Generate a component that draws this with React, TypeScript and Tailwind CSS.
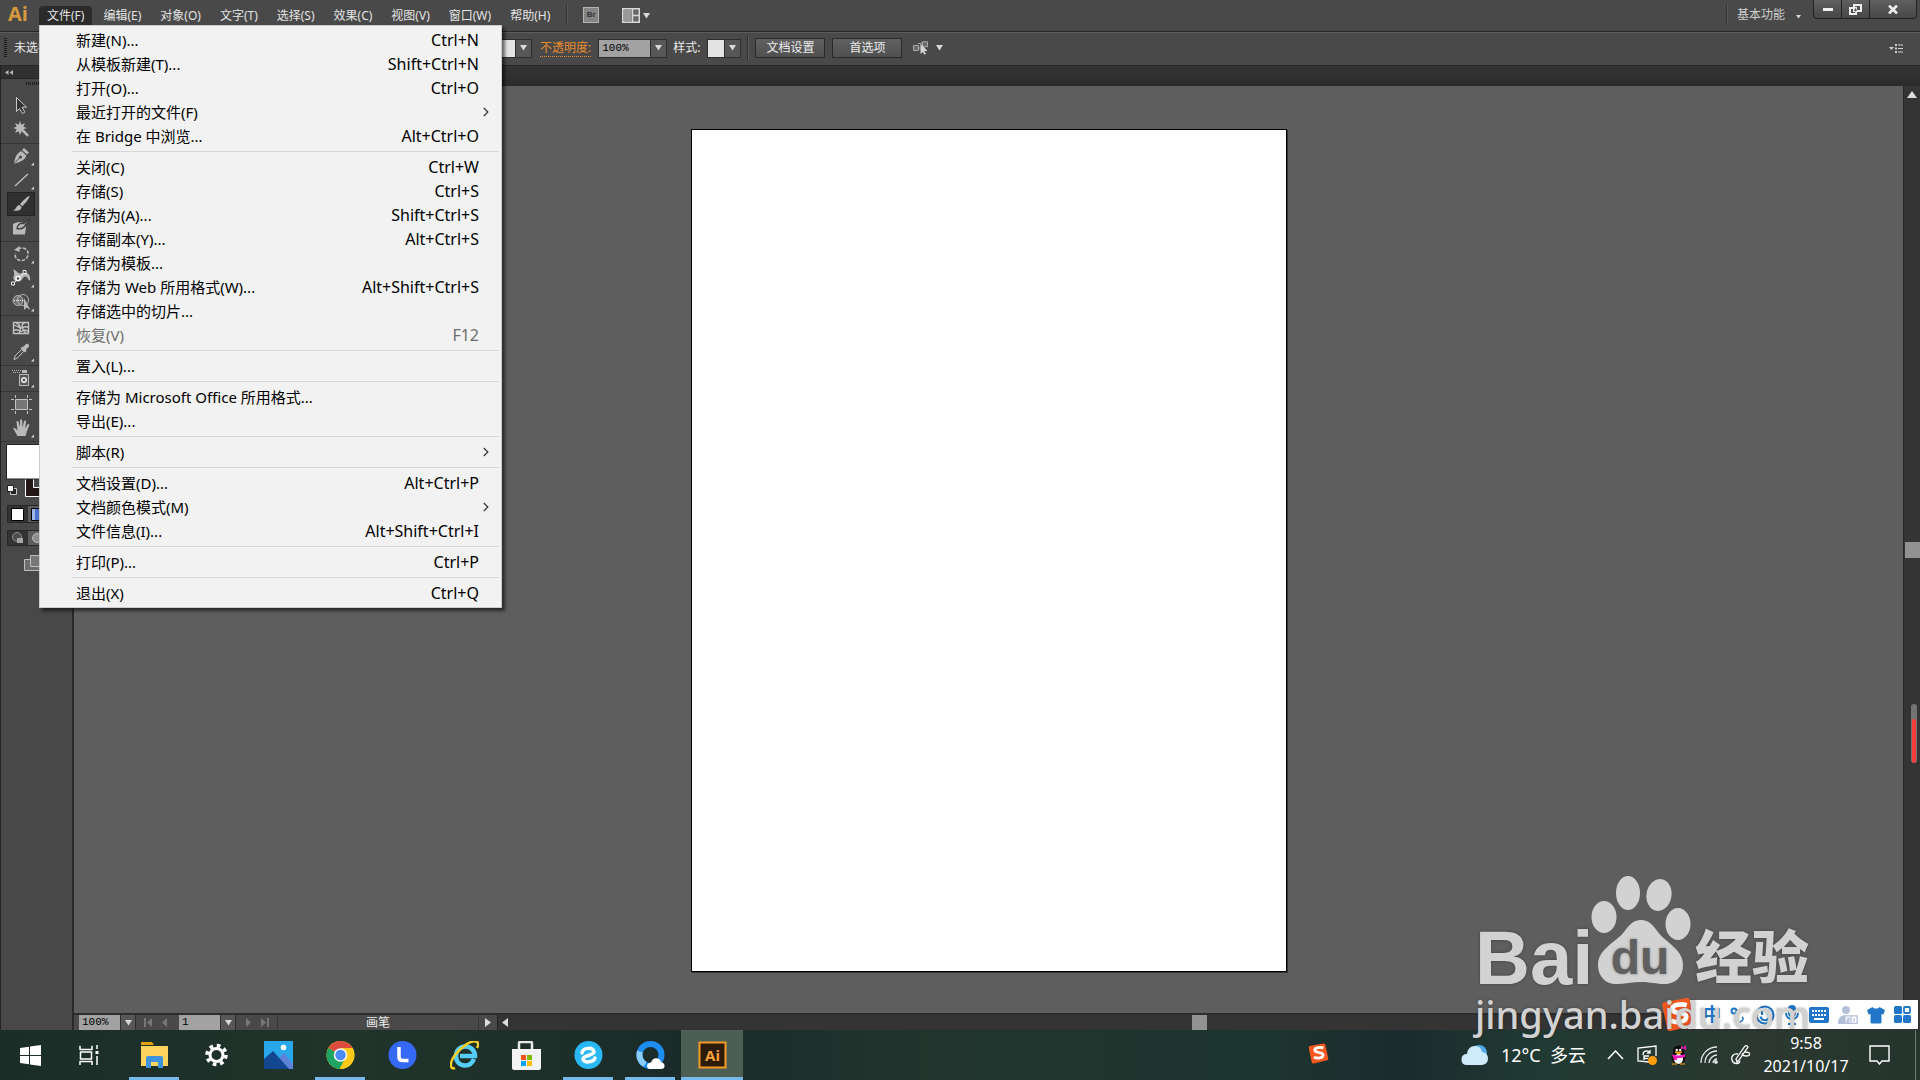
import React, { useState } from 'react';

interface MenuEntry {
  label: string;
  shortcut?: string;
  submenu?: boolean;
  disabled?: boolean;
}

const MENU_TITLES = ['文件(F)', '编辑(E)', '对象(O)', '文字(T)', '选择(S)', '效果(C)', '视图(V)', '窗口(W)', '帮助(H)'];

const FILE_MENU: MenuEntry[][] = [
  [
    { label: '新建(N)...', shortcut: 'Ctrl+N' },
    { label: '从模板新建(T)...', shortcut: 'Shift+Ctrl+N' },
    { label: '打开(O)...', shortcut: 'Ctrl+O' },
    { label: '最近打开的文件(F)', submenu: true },
    { label: '在 Bridge 中浏览...', shortcut: 'Alt+Ctrl+O' },
  ],
  [
    { label: '关闭(C)', shortcut: 'Ctrl+W' },
    { label: '存储(S)', shortcut: 'Ctrl+S' },
    { label: '存储为(A)...', shortcut: 'Shift+Ctrl+S' },
    { label: '存储副本(Y)...', shortcut: 'Alt+Ctrl+S' },
    { label: '存储为模板...' },
    { label: '存储为 Web 所用格式(W)...', shortcut: 'Alt+Shift+Ctrl+S' },
    { label: '存储选中的切片...' },
    { label: '恢复(V)', shortcut: 'F12', disabled: true },
  ],
  [{ label: '置入(L)...' }],
  [{ label: '存储为 Microsoft Office 所用格式...' }, { label: '导出(E)...' }],
  [{ label: '脚本(R)', submenu: true }],
  [
    { label: '文档设置(D)...', shortcut: 'Alt+Ctrl+P' },
    { label: '文档颜色模式(M)', submenu: true },
    { label: '文件信息(I)...', shortcut: 'Alt+Shift+Ctrl+I' },
  ],
  [{ label: '打印(P)...', shortcut: 'Ctrl+P' }],
  [{ label: '退出(X)', shortcut: 'Ctrl+Q' }],
];

const Caret: React.FC<{ className?: string }> = ({ className = '' }) => (
  <svg className={className} width="7" height="6" viewBox="0 0 7 6" fill="#d9d9d9">
    <path d="M0 0h7L3.500 5.500z" />
  </svg>
);

const FileMenu: React.FC = () => (
  <div
    role="menu"
    className="absolute left-0 top-full z-20 w-[463px] border border-[#cccccc] bg-[#f2f2f2] py-0.5 text-[15px] text-black shadow-[3px_3px_3px_rgba(0,0,0,0.55)]"
  >
    {FILE_MENU.map((group, i) => (
      <React.Fragment key={i}>
        {i > 0 && <hr className="my-[3px] ml-8 mr-0.5 h-px border-0 bg-[#d7d7d7]" />}
        {group.map((item) => (
          <button
            key={item.label}
            role="menuitem"
            disabled={item.disabled}
            className="flex h-6 w-full items-center justify-between pl-9 pr-[22px] leading-6 hover:bg-[#91c9f7] disabled:text-[#6d6d6d]"
          >
            <span className="whitespace-pre">{item.label}</span>
            {item.shortcut && <span className="text-base leading-6">{item.shortcut}</span>}
            {item.submenu && (
              <svg className="-mr-2.5" width="6" height="10" viewBox="0 0 6 10" fill="none" stroke="#333" strokeWidth="1.200">
                <path d="M.8 1l4 4-4 4" />
              </svg>
            )}
          </button>
        ))}
      </React.Fragment>
    ))}
  </div>
);

const MenuBar: React.FC = () => {
  const [open, setOpen] = useState(true);
  return (
    <header className="flex h-8 shrink-0 items-start border-b border-[#262626] bg-[#494949] text-xs text-[#e4e4e4]">
      <div className="w-[39px] pl-2 pt-px font-['Open_Sans'] text-[20px] font-bold leading-[26px] text-[#d9993e]">Ai</div>
      <nav className="relative flex h-[25px] items-end gap-[3px]">
        {MENU_TITLES.map((title, i) => (
          <button
            key={title}
            onClick={() => i === 0 && setOpen(!open)}
            className={`h-[19px] whitespace-nowrap px-2 leading-[19px] ${i === 0 ? 'rounded-t-sm bg-[#2b2b2b]' : ''}`}
          >
            {title}
          </button>
        ))}
        {open && <FileMenu />}
      </nav>
      <div className="ml-2 mt-[5px] h-5 w-0.5 border-l border-[#303030] bg-[#5a5a5a]" />
      <button className="ml-[15px] mt-[7px] flex h-4 w-4 items-center justify-center border border-[#b5b5b5] bg-[#858585] font-['Liberation_Sans'] text-[8px] font-bold text-[#333]">
        Br
      </button>
      <button aria-label="排列文档" className="ml-[23px] mt-2 flex items-center gap-[3px]">
        <svg width="18" height="15" viewBox="0 0 18 15" fill="#666" stroke="#d8d8d8" strokeWidth="1.500">
          <path d="M.75.75h16.500v13.500H.75zM10.500.75v13.500M10.500 7.500h6.750" />
          <path d="M2 2h7.500v11H2z" fill="#999" stroke="none" />
        </svg>
        <Caret />
      </button>
      <div className="ml-auto mt-[5px] h-5 w-0.5 border-l border-[#303030] bg-[#5a5a5a]" />
      <button className="ml-[9px] mt-[5px] flex items-center gap-[11px] leading-[19px] text-[#cfcfcf]">
        基本功能
        <svg className="mt-1" width="5" height="4" viewBox="0 0 5 4" fill="#d9d9d9"><path d="M0 0h5L2.500 3.500z" /></svg>
      </button>
      <div className="ml-3 mr-[3px] flex h-[19px] divide-x divide-[#222] rounded-b border border-t-0 border-[#222] bg-gradient-to-b from-[#606060] to-[#474747]">
        <button aria-label="最小化" className="flex w-7 items-center justify-center">
          <svg width="10" height="4" viewBox="0 0 10 4" fill="#eee"><path d="M0 1h10v3H0z" /></svg>
        </button>
        <button aria-label="还原" className="flex w-7 items-center justify-center">
          <svg width="13" height="11" viewBox="0 0 13 11" fill="none" stroke="#eee" strokeWidth="2">
            <path d="M5 1h7v6H5zM1 4h6v6H1z" />
            <path d="M6 5h1v2H6z" stroke="#444" strokeWidth="1" />
          </svg>
        </button>
        <button aria-label="关闭" className="flex w-[46px] items-center justify-center">
          <svg width="10" height="9" viewBox="0 0 10 9" stroke="#eee" strokeWidth="2.600"><path d="M1 .5l8 8M9 .5l-8 8" /></svg>
        </button>
      </div>
    </header>
  );
};

const DropButton: React.FC<{ label: string; className?: string }> = ({ label, className = '' }) => (
  <button aria-label={label} className={`flex w-4 items-center justify-center border border-[#2e2e2e] bg-[#575757] ${className}`}>
    <Caret />
  </button>
);

const OptionsBar: React.FC = () => (
  <div className="flex h-[34px] shrink-0 items-center border-b border-t border-b-[#262626] border-t-[#5c5c5c] bg-[#494949] pb-0.5 text-xs text-[#ececec]">
    <div className="ml-1 h-5 w-[3px] bg-[repeating-linear-gradient(#1c1c1c_0_1px,#494949_1px_2px)]" />
    <span className="ml-[7px] w-[468px]">未选择对象</span>
    <div className="ml-3 flex h-[19px]">
      <button aria-label="图形样式" className="w-[22px] border border-[#2e2e2e] bg-[#e3e3e3]" />
      <DropButton label="图形样式列表" className="border-l-0" />
    </div>
    <label htmlFor="opacity" className="ml-2 border-b border-dotted border-[#e58a2c] leading-4 text-[#e58a2c]">不透明度:</label>
    <div className="ml-[7px] flex h-[19px]">
      <input
        id="opacity"
        defaultValue="100%"
        className="w-[53px] border border-[#2e2e2e] bg-[#a2a2a2] pl-[3px] font-['Liberation_Mono'] text-[11px] text-black"
      />
      <DropButton label="不透明度列表" className="border-l-0" />
    </div>
    <span className="ml-1.5">样式:</span>
    <div className="ml-[7px] flex h-[19px]">
      <button aria-label="样式" className="w-[18px] border border-[#2e2e2e] bg-[#e3e3e3]" />
      <DropButton label="样式列表" className="border-l-0" />
    </div>
    <div className="ml-1.5 h-6 w-0.5 border-l border-[#303030] bg-[#5a5a5a]" />
    <button className="ml-1.5 h-5 w-[70px] border border-[#2a2a2a] bg-gradient-to-b from-[#616161] to-[#505050] leading-[18px]">文档设置</button>
    <button className="ml-[7px] h-5 w-[70px] border border-[#2a2a2a] bg-gradient-to-b from-[#616161] to-[#505050] leading-[18px]">首选项</button>
    <button aria-label="选择类似的对象" className="ml-[11px] flex items-center gap-[7px]">
      <svg width="16" height="14" viewBox="0 0 16 14" fill="#6b6b6b" stroke="#a8a8a8">
        <path d="M.5 4.500h5v5h-5zM9.500.8h5v5h-5z" />
        <path d="M5.500 7h3M7 3l2-1.500M5 2.500h3" />
        <path d="M7.500 2.500v10.500l2.300-2 1.700 2.800 1.500-1-1.700-2.800h3.200z" fill="#d4d4d4" stroke="none" />
      </svg>
      <Caret />
    </button>
    <button aria-label="面板菜单" className="ml-auto mr-[17px]">
      <svg width="14" height="9" viewBox="0 0 14 9" fill="#cfcfcf">
        <path d="M0 3h5L2.500 6zM6 0h2v2H6zM6 3.500h2v2H6zM6 7h2v2H6zM9 .5h5v1H9zM9 4h5v1H9zM9 7.500h5v1H9z" />
      </svg>
    </button>
  </div>
);

interface Tool {
  name: string;
  icon: React.ReactNode;
  flyout?: boolean;
  active?: boolean;
}

const TOOL_GROUPS: Tool[][] = [
  [
    { name: '选择工具', icon: <path d="M5.500 1.500v14l3-3 2.800 5 2.500-1.300-2.800-5H15.500z" fill="#333" stroke="#c8c8c8" /> },
    {
      name: '魔棒工具',
      icon: <path d="M9 1l1.400 3.700L14 3l-1.600 3.700L16 8l-3.500 1.300L18 15l-1.800 1.800-5.600-5.600L9 15l-1.400-3.800L4 13l1.600-3.700L2 8l3.600-1.300L4 3l3.600 1.700z" />,
    },
  ],
  [
    {
      name: '钢笔工具',
      flyout: true,
      icon: (
        <>
          <path d="M13 2l5 4.500-2 2-5-4.500zM10.500 5l4.800 4.500c-1 4-5 6.500-12.300 8C4 11 6 7 10.500 5z" />
          <path d="M4 16.500l5-5" stroke="#484848" />
          <circle cx="9.500" cy="11" r="1.600" fill="#484848" />
        </>
      ),
    },
    { name: '直线段工具', flyout: true, icon: <path d="M4 16L17 4" stroke="#c4c4c4" strokeWidth="1.300" /> },
    {
      name: '画笔工具',
      active: true,
      icon: <path d="M18.500 2c.8.800-4 7.500-7.300 10.300L9 10.200C11.500 7 17.500 1.500 18.500 2zM8.300 11l2.200 2c.2 3-3.500 4.500-8.500 3.600C5.500 15.500 5 11.500 8.300 11z" />,
    },
    {
      name: '斑点画笔工具',
      icon: (
        <>
          <path d="M2 6c3-2 6-2 9-1.500l4 4.500-1 7.500H2z" />
          <path d="M18.500 1.500l-6 4C9 5 6.500 7 6 10.500c4 .8 7.500-.5 8.500-4l4.500-4z" fill="#b0b0b0" stroke="#3c3c3c" strokeWidth="1.300" />
        </>
      ),
    },
  ],
  [
    {
      name: '旋转工具',
      flyout: true,
      icon: (
        <>
          <path d="M7 5c6-3 11 1 10 6-1 6-9 7.500-12 3-1-1.500-1-3-.5-5" fill="none" stroke="#bdbdbd" strokeWidth="1.600" strokeDasharray="3.500 1.500" />
          <path d="M3 6l5.500-4v6z" />
        </>
      ),
    },
    {
      name: '宽度工具',
      flyout: true,
      icon: (
        <>
          <path d="M2 1.500c3 0 4 3.500 7 4 2 .3 4-2 6-1 4 1.500 4.500 5.500 4 8-2 0-2-4-4.500-4-3 0-3 5-7.500 5-4 0-5.500-3-4-6 .5-2 0-4-1-6z" />
          <path d="M2 16L14 4" stroke="#eee" />
          <path d="M.5 14h3v3h-3zM12 2.500h3v3h-3z" fill="#444" stroke="#eee" />
          <circle cx="7" cy="10.500" r="2" fill="#444" stroke="#fff" strokeWidth="1.300" />
        </>
      ),
    },
    {
      name: '形状生成器工具',
      flyout: true,
      icon: (
        <>
          <circle cx="7" cy="8.500" r="5" fill="#727272" stroke="#b5b5b5" />
          <circle cx="12" cy="8" r="5.500" fill="none" stroke="#b5b5b5" />
          <path d="M3 8.500h12" stroke="#eee" strokeDasharray="1 1" />
          <path d="M13 6v12l2.700-2.600 3.800 2.600z" />
        </>
      ),
    },
  ],
  [
    {
      name: '网格工具',
      icon: (
        <g fill="none" stroke="#c2c2c2" strokeWidth="1.400">
          <path d="M2.500 4.500h15v11h-15z" />
          <path d="M5 4.500c4 2 6 6 3 11M14 4.500c-5 2-3 6 1 11M2.500 7.500c4-1 6 4 9 2 2-1 4-1 6 0M2.500 13c4-4 6 2 9 0 2-2 4-1 6 1" />
        </g>
      ),
    },
    {
      name: '吸管工具',
      flyout: true,
      icon: (
        <>
          <path d="M11 5l1.500-.5L15 2c2-1 4 1 2.800 3L15 7.500l.5 1.500-1.500 1.500L9.500 6z" />
          <path d="M10.500 7.500L4 14l-1 3.500L6.500 16l6-6.500z" fill="none" stroke="#c2c2c2" />
        </>
      ),
    },
  ],
  [
    {
      name: '符号喷枪工具',
      flyout: true,
      icon: (
        <>
          <path d="M8.500 6.500h9v11h-9z" fill="#565656" stroke="#bdbdbd" />
          <path d="M11 2h5v3h-5zM1 2h1v1H1zM3 2h1v1H3zM5 2h1v1H5zM7 2h1v1H7zM9 2h1v1H9zM2 4h1v1H2zM4 4h1v1H4zM6 4h1v1H6zM8 4h1v1H8z" />
          <circle cx="13" cy="12" r="2.200" fill="none" stroke="#ddd" strokeWidth="1.800" />
        </>
      ),
    },
  ],
  [
    { name: '画板工具', icon: <path d="M4.500 5.500h12v10h-12zM4.500 1v3M16.500 1v3M4.500 17v3M16.500 17v3M0 5.500h3M18 5.500h3M0 15.500h3M18 15.500h3" fill="#777" stroke="#c2c2c2" /> },
    {
      name: '抓手工具',
      flyout: true,
      icon: <path d="M6.500 18l-4-7c-.7-1.300 1-1.700 2-.5l2 2L5.500 4c0-1.500 1.800-1.500 2.200 0L9 9.500V2.500c0-1.500 2-1.500 2.200 0l.3 7 1.500-6.200c.4-1.400 2.200-1 2 .5l-.8 6.700 2.300-4c.8-1.200 2.200-.4 1.700 1L16 13l-1.500 5z" />,
    },
  ],
];

const ToolPanel: React.FC = () => (
  <aside className="flex w-[74px] shrink-0 flex-col border-l border-r-2 border-l-[#232323] border-r-[#2a2a2a] bg-[#484848]">
    <button aria-label="折叠面板" className="h-[13px] shrink-0 border-b border-[#262626] bg-[#303030] pl-1">
      <svg width="8" height="5" viewBox="0 0 8 5" fill="#b5b5b5"><path d="M3.500 0v5L0 2.500zM8 0v5L4.500 2.500z" /></svg>
    </button>
    <div className="mb-[9px] ml-[25px] mt-[3px] h-[3px] w-6 bg-[repeating-linear-gradient(90deg,#1c1c1c_0_1px,#484848_1px_2px)]" />
    {TOOL_GROUPS.map((group, i) => (
      <div key={i} className="flex flex-col border-b border-[#363636] pb-px pl-1.5">
        {group.map((tool) => (
          <button
            key={tool.name}
            aria-label={tool.name}
            className={`flex h-6 w-7 items-center justify-center ${tool.active ? 'border border-[#232323] bg-[#303030]' : ''}`}
          >
            <svg className="shrink-0" width="28" height="24" viewBox="-4 -2 28 24" fill="#b9b9b9">
              {tool.icon}
              {tool.flyout && <path d="M23 16.500v3h-3z" fill="#d8d8d8" />}
            </svg>
          </button>
        ))}
      </div>
    ))}
    <svg className="ml-[5px] mt-0.5 shrink-0" width="60" height="128" viewBox="0 0 60 128">
      <path d="M19.500 18.500h34v34h-34z" fill="#231815" stroke="#fff" />
      <path d="M27.500 27.500h16v16h-16z" fill="#484848" stroke="#fff" />
      <path d="M.5.500h36v34.500H.5z" fill="#fff" stroke="#222" />
      <path d="M4.500 44.500h6v6h-6z" fill="#222" stroke="#ccc" />
      <path d="M1.500 41.500h6v6h-6z" fill="#fff" stroke="#222" />
      <path d="M1.500 61.500h50v17h-50z" fill="#333" stroke="#272727" />
      <path d="M22 62h29v16H22z" fill="#5c5c5c" />
      <path d="M5.500 64.500h12v12h-12z" fill="#fff" stroke="#000" />
      <path d="M25.500 64.500h12v12h-12z" fill="#4a72c8" stroke="#000" />
      <path d="M26 65h3v11h-3z" fill="#9db6e8" />
      <path d="M1.500 86.500h50v15h-50z" fill="#333" stroke="#272727" />
      <path d="M22 87h29v14H22z" fill="#5c5c5c" />
      <circle cx="11" cy="93" r="4.500" fill="#4d4d4d" stroke="#8d8d8d" />
      <path d="M11 94h6v5h-6z" fill="#a5a5a5" />
      <circle cx="31" cy="94" r="4.500" fill="#8d8d8d" stroke="#bbb" />
      <path d="M18.500 115.500h15v11h-15z" fill="#6d6d6d" stroke="#bdbdbd" />
      <path d="M24.500 111.500h18v11h-18z" fill="#777" stroke="#bdbdbd" />
    </svg>
  </aside>
);

const StatusBar: React.FC = () => (
  <div className="flex h-[17px] shrink-0 border-t-2 border-[#2d2d2d] bg-[#494949] text-xs leading-[15px] text-[#ececec]">
    <input
      aria-label="缩放"
      defaultValue="100%"
      className="ml-[5px] w-[41px] bg-[#a2a2a2] pl-[3px] font-['Liberation_Mono'] text-[11px] text-black"
    />
    <DropButton label="缩放列表" className="border-y-0" />
    <div className="flex w-[43px] items-center gap-2.5 pl-2">
      <svg width="8" height="9" viewBox="0 0 8 9" fill="#777"><path d="M0 0h2v9H0zM8 0v9L3 4.500z" /></svg>
      <svg width="5" height="9" viewBox="0 0 5 9" fill="#777"><path d="M5 0v9L0 4.500z" /></svg>
    </div>
    <input
      aria-label="画板"
      defaultValue="1"
      className="w-[41px] bg-[#a2a2a2] pl-[3px] font-['Liberation_Mono'] text-[11px] text-black"
    />
    <DropButton label="画板列表" className="border-y-0" />
    <div className="flex w-[42px] items-center gap-2.5 border-r border-[#363636] pl-2.5">
      <svg width="5" height="9" viewBox="0 0 5 9" fill="#777"><path d="M0 0v9l5-4.500z" /></svg>
      <svg width="8" height="9" viewBox="0 0 8 9" fill="#777"><path d="M6 0h2v9H6zM0 0v9l5-4.500z" /></svg>
    </div>
    <span className="w-[200px] text-center">画笔</span>
    <button aria-label="状态栏选项" className="flex w-[19px] items-center justify-center border-l border-[#363636]">
      <svg width="6" height="9" viewBox="0 0 6 9" fill="#ddd"><path d="M0 0v9l6-4.500z" /></svg>
    </button>
    <div className="flex flex-1 items-center border-l border-[#222] bg-[#343434]">
      <svg className="ml-1" width="6" height="9" viewBox="0 0 6 9" fill="#ddd"><path d="M6 0v9L0 4.500z" /></svg>
      <div className="w-[48%] grow-0" />
      <div className="ml-2.5 h-[15px] w-[15px] bg-[#929292]" />
    </div>
  </div>
);

const Workspace: React.FC = () => (
  <div className="flex min-h-0 flex-1 bg-[#5e5e5e]">
    <ToolPanel />
    <main className="flex min-w-0 flex-1 flex-col">
      <div className="h-5 shrink-0 bg-gradient-to-b from-[#343434] to-[#2b2b2b]" />
      <div className="flex min-h-0 flex-1">
        <div className="flex min-w-0 flex-1 flex-col">
          <div className="flex flex-1 items-center justify-center pt-px">
            <div className="h-[843px] w-[596px] border border-black bg-white shadow-[1px_1px_0_#333]" />
          </div>
          <StatusBar />
        </div>
        <div className="relative flex w-[17px] flex-col items-center border-l border-[#262626] bg-[#343434]">
          <svg className="mt-[5px] shrink-0" width="10" height="7" viewBox="0 0 10 7" fill="#ddd"><path d="M5 0l5 7H0z" /></svg>
          <div className="h-[47%]" />
          <div className="h-4 w-[15px] bg-[#929292]" />
          <div className="absolute right-[3px] top-[618px] flex h-[59px] w-1.5 items-end rounded-full bg-[#747474] px-px">
            <div className="h-11 w-full rounded-full bg-[#f63b3b]" />
          </div>
        </div>
      </div>
    </main>
  </div>
);

const SogouIcon: React.FC<{ size: number }> = ({ size }) => (
  <svg width={size} height={size} viewBox="0 0 34 34">
    <path d="M3 5Q1 5.500 1.200 7.500L6 31q.6 2.500 3 2l22-5q2.200-.6 1.800-3L28 3q-.6-2.500-3-2z" fill="#f4581f" />
    <path d="M25 8c-5-1.500-14-1-14 3.500 0 6 14 2 13.500 8-.5 5-9 6-15 3.500" fill="none" stroke="#fff" strokeWidth="4.500" />
  </svg>
);

const ImeBar: React.FC = () => (
  <div className="absolute bottom-[51px] right-0.5 z-10 flex h-[29px] w-[230px] items-center justify-end gap-[9px] bg-white pr-[7px] text-[#2176c7]">
    <div className="absolute -left-[27px] -top-[3px]">
      <SogouIcon size={35} />
    </div>
    <span className="text-[18px] font-bold leading-[29px]">中</span>
    <svg width="16" height="18" viewBox="0 0 16 18" fill="none" stroke="currentColor" strokeWidth="2">
      <circle cx="4" cy="5" r="2.500" />
      <path d="M12 11c2 1 1 4-2 5" strokeWidth="1.600" />
    </svg>
    <svg width="20" height="20" viewBox="0 0 20 20" fill="none" stroke="currentColor" strokeWidth="2.200">
      <circle cx="10" cy="10" r="8.500" />
      <path d="M7 5v5M13 5v5M5.500 11.500c1.500 5 7.500 5 9 0" />
    </svg>
    <svg width="16" height="20" viewBox="0 0 16 20" fill="none" stroke="currentColor" strokeWidth="2">
      <rect x="5" y="1" width="6" height="10" rx="3" fill="currentColor" />
      <path d="M2 8c0 8 12 8 12 0M8 14v5M4 19h8" />
    </svg>
    <svg width="20" height="16" viewBox="0 0 20 16">
      <rect width="20" height="16" rx="2" fill="currentColor" />
      <path d="M3 4h14M3 8h14" stroke="#fff" strokeWidth="2" strokeDasharray="2 1" />
      <path d="M5 12h10" stroke="#fff" strokeWidth="2" />
    </svg>
    <svg width="20" height="18" viewBox="0 0 20 18" fill="#b4bfda">
      <circle cx="8" cy="4" r="4" />
      <path d="M0 18c0-7 3-9 8-9v9z" />
      <path d="M7 9.800h12.200v7.500H7zM13 10v7M9 12.500h2v2H9v2h2.500M16 12v4" fill="#fff" stroke="#b4bfda" strokeWidth="1.300" />
    </svg>
    <svg width="18" height="18" viewBox="0 0 18 18" fill="currentColor">
      <path d="M5.500 1c1.500 2 5.500 2 7 0L18 4l-1.500 4.500-2-.5v8q0 1.500-1.500 1.500H5Q3.500 17.500 3.500 16V8l-2 .5L0 4z" />
    </svg>
    <svg width="17" height="17" viewBox="0 0 17 17" fill="currentColor">
      <rect width="8" height="8" rx="1.500" />
      <rect y="9" width="8" height="8" rx="1.500" />
      <rect x="9" y="9" width="8" height="8" rx="1.500" />
      <rect x="10" y="1" width="6" height="6" rx="1" fill="none" stroke="currentColor" strokeWidth="1.800" />
    </svg>
  </div>
);

const Watermark: React.FC = () => (
  <div className="pointer-events-none absolute bottom-11 right-[101px] z-20 w-[344px] text-[#d2d2d2] [text-shadow:0_0_3px_rgba(0,0,0,0.35)]">
    <div className="flex items-end">
      <span className="w-[114px] font-['Liberation_Sans'] text-[76px] font-bold leading-[80px]">Bai</span>
      <svg className="mb-[13px] ml-0.5" width="100" height="110" viewBox="0 0 100 110" fill="#d2d2d2">
        <ellipse cx="13" cy="42" rx="12.500" ry="16" />
        <ellipse cx="37" cy="18" rx="12" ry="17" />
        <ellipse cx="68" cy="20" rx="12.500" ry="16" transform="rotate(10 68 20)" />
        <ellipse cx="87" cy="49" rx="12.500" ry="16" />
        <path d="M50 45c8 0 12 5 17 12 8 11 25 17 25 33 0 13-9 19-18 19-9 0-15-2-24-2s-16 2-25 2C15 109 7 102 7 90c0-16 17-22 26-33 5-7 9-12 17-12z" />
        <text x="49" y="99" textAnchor="middle" fontFamily="Liberation Sans" fontWeight="700" fontSize="48" fill="#606060">du</text>
      </svg>
      <span className="ml-1 whitespace-nowrap text-[57px] font-black leading-[84px]">经验</span>
    </div>
    <div className="-mt-1.5 whitespace-nowrap text-[38px] font-medium leading-[44px]">jingyan.baidu.com</div>
  </div>
);

interface TaskApp {
  name: string;
  icon: React.ReactNode;
  running?: boolean;
  focused?: boolean;
}

const TASK_APPS: TaskApp[] = [
  {
    name: '文件资源管理器',
    running: true,
    icon: (
      <>
        <path d="M1 2q0-1 1-1h10l2 3h-13z" fill="#e5a00d" />
        <path d="M1 5h27v20H1z" fill="#ffd45e" />
        <path d="M6 17q0-2 2-2h13q2 0 2 2v10h-5v-6h-7v6H6z" fill="#3d93dc" />
      </>
    ),
  },
  {
    name: '设置',
    icon: (
      <g fill="none" stroke="#fff">
        <circle cx="14.500" cy="14" r="6.500" strokeWidth="3" />
        <circle cx="14.500" cy="14" r="9.500" strokeWidth="3.500" strokeDasharray="3.700 3.760" />
      </g>
    ),
  },
  {
    name: '照片',
    icon: (
      <>
        <path d="M0 0h29v28H0z" fill="#28a8ea" />
        <path d="M16 16l4-4 9 11v5H16z" fill="#5d82d8" />
        <path d="M0 18l9-8 16 18H0z" fill="#12468f" />
        <circle cx="19.500" cy="6.500" r="2.800" fill="#fff" />
      </>
    ),
  },
  {
    name: 'Chrome',
    running: true,
    icon: (
      <>
        <circle cx="14.500" cy="14" r="14" fill="#fbc918" />
        <path d="M14.500 14L2.400 7A14 14 0 0 1 26.600 7z" fill="#dd4b3e" />
        <path d="M14.500 14L2.400 7a14 14 0 0 0 11 21l6-11z" fill="#1da362" />
        <path d="M14.500 7h12.100A14 14 0 0 1 14.500 28l6-11z" fill="#fbc918" />
        <circle cx="14.500" cy="14" r="6.800" fill="#f5f5f5" />
        <circle cx="14.500" cy="14" r="5.200" fill="#4a8af4" />
      </>
    ),
  },
  {
    name: '联想',
    icon: (
      <>
        <circle cx="14.500" cy="14" r="14" fill="#3468f5" />
        <path d="M11 6v10q0 3.500 3.500 3.500h6" fill="none" stroke="#fff" strokeWidth="3.500" />
      </>
    ),
  },
  {
    name: 'Internet Explorer',
    icon: (
      <>
        <path d="M24 18c-2 5-5 6.500-9 6.500-5.500 0-9-4-9-9.500s4-9.500 9.500-9.500S25 10 25 15H10" fill="none" stroke="#55cdf8" strokeWidth="4.500" />
        <path d="M5 27C0 29-1 22 5 14S22-2 27 1c2 1 1 4 0 6" fill="none" stroke="#f4cf27" strokeWidth="2.500" />
      </>
    ),
  },
  {
    name: 'Microsoft Store',
    icon: (
      <>
        <path d="M7 9V2q0-1 1-1h11q1 0 1 1v7" fill="none" stroke="#e8e8e8" strokeWidth="2.500" />
        <path d="M0 8h29v19q0 2-2 2H2q-2 0-2-2z" fill="#f3f3f3" />
        <path d="M9 14h5v5H9z" fill="#f1511b" />
        <path d="M15 14h5v5h-5z" fill="#80bb01" />
        <path d="M9 20h5v5H9z" fill="#01a5ef" />
        <path d="M15 20h5v5h-5z" fill="#fbbb01" />
      </>
    ),
  },
  {
    name: '搜狗浏览器',
    running: true,
    icon: (
      <>
        <circle cx="14.500" cy="14" r="14" fill="#2ab8f5" />
        <path d="M8 12c1-6 11-6 12-1 .5 3-11 3.500-11 7 0 4 10 4 12-1" fill="none" stroke="#fff" strokeWidth="3.500" strokeLinecap="round" />
      </>
    ),
  },
  {
    name: 'QQ浏览器',
    running: true,
    icon: (
      <>
        <circle cx="14.500" cy="14" r="11" fill="none" stroke="#1e8df2" strokeWidth="6" />
        <path d="M9 23.500a11 11 0 0 1-5-13" fill="none" stroke="#8accf8" strokeWidth="6" />
        <path d="M14 28q-3 0-3-3t4-3.500q2-5 6.500-4 3 .5 3.500 3.500 4 1 3.500 4.500-.5 2.500-3.500 2.500z" fill="#fff" />
      </>
    ),
  },
  {
    name: 'Adobe Illustrator',
    running: true,
    focused: true,
    icon: (
      <>
        <path d="M1.500 1.500h26v25h-26z" fill="#2b1b0a" stroke="#f39c25" strokeWidth="2" />
        <text x="14.500" y="20" textAnchor="middle" fontFamily="Open Sans" fontWeight="700" fontSize="15" fill="#f7a13b">Ai</text>
      </>
    ),
  },
];

const Taskbar: React.FC = () => (
  <footer className="relative flex h-[50px] shrink-0 items-stretch bg-[linear-gradient(90deg,#1b2d27_0%,#20342b_18%,#1e3029_28%,#1a2a2a_36%,#21352d_48%,#1d3530_66%,#1c2b2d_73%,#203a33_80%,#2b3830_92%,#24352e_100%)] text-white">
    <button aria-label="开始" className="flex w-[61px] items-center justify-center">
      <svg width="21" height="21" viewBox="0 0 21 21" fill="#fff">
        <path d="M0 3l9-1.300V10H0zM10 1.500L21 0v10H10zM0 11h9v8.300L0 18zM10 11h11v10l-11-1.500z" />
      </svg>
    </button>
    <button aria-label="任务视图" className="flex w-[62px] items-center pl-[18px]">
      <svg width="20" height="20" viewBox="0 0 20 20" fill="none" stroke="#fff" strokeWidth="1.500">
        <path d="M1 5V.8M13 5V.8M.8 4.500h12.500M1.500 7h11v7h-11zM.8 16.500h12.500M1 16v4M13 16v4M18 0v4M18 11v9" />
        <path d="M16.500 6h3v3h-3z" fill="#fff" stroke="none" />
      </svg>
    </button>
    {TASK_APPS.map((app) => (
      <button
        key={app.name}
        aria-label={app.name}
        className={`relative flex w-[62px] items-center justify-center ${app.focused ? 'bg-[#4d5f55]' : ''}`}
      >
        <svg width="29" height="29" viewBox="0 0 29 29">{app.icon}</svg>
        {app.running && <span className={`absolute bottom-0 h-[3px] bg-[#76b9ed] ${app.focused ? 'inset-x-0' : 'inset-x-1.5'}`} />}
      </button>
    ))}
    <div className="ml-auto flex items-center">
      <button aria-label="搜狗输入法" className="mb-1 mr-[132px]">
        <SogouIcon size={21} />
      </button>
      <button className="flex items-center text-lg leading-6">
        <svg width="28" height="20" viewBox="0 0 28 20">
          <circle cx="18" cy="8" r="8" fill="#54a9ea" />
          <path d="M6 20q-5.500 0-5.500-5.500T6 9q1-8 8-8 6 0 7 6 6 1 6 6.500T21 20z" fill="#cfeafb" />
        </svg>
        <span className="ml-3 whitespace-pre">12°C  多云</span>
      </button>
      <div className="ml-[21px] flex items-center gap-[13px]">
        <svg width="17" height="10" viewBox="0 0 17 10" fill="none" stroke="#fff" strokeWidth="1.500"><path d="M1 9l7.500-8L16 9" /></svg>
        <svg width="20" height="20" viewBox="0 0 20 20" fill="none" stroke="#fff" strokeWidth="1.300">
          <path d="M12 17L1 16V3l18-2v10M6 10c0-5 6-5 7-2M13 5v3h-3M12 11H7v4M7 12c1 2 3 2 4 1" />
          <circle cx="15.500" cy="15.500" r="4.500" fill="#ff9d0a" stroke="none" />
        </svg>
        <svg width="17" height="20" viewBox="0 0 17 20">
          <ellipse cx="8.500" cy="12" rx="7" ry="7.500" fill="#0b0b0b" />
          <circle cx="8.500" cy="6" r="5.500" fill="#0b0b0b" />
          <ellipse cx="8.500" cy="14" rx="4.500" ry="5" fill="#fff" />
          <path d="M2 9q6 3 13 0v3q-5 1.500-8 1v2H4z" fill="#f318b8" />
          <path d="M11 1l2.500 1.500L16 0v5l-2.500-1.500L11 4z" fill="#f318b8" />
          <path d="M5 7h7l-3.500 2zM2 19h5M10 19h5" fill="#ffa60a" stroke="#ffa60a" />
          <circle cx="6.800" cy="5" r="1.200" fill="#fff" />
          <circle cx="10.200" cy="5" r="1.200" fill="#fff" />
        </svg>
        <svg width="18" height="18" viewBox="0 0 18 18" fill="none" stroke="#e8e8e8" strokeWidth="1.300">
          <path d="M1 17C1 8 8 1 17 1M5 17C5 10 10 5 17 5M9 17c0-4 4-8 8-8M13 17c0-2 2-4 4-4" />
          <circle cx="16" cy="16" r="1.200" fill="#fff" />
        </svg>
        <svg width="20" height="20" viewBox="0 0 20 20" fill="none" stroke="#fff" strokeWidth="1.300">
          <path d="M6 17l-1-3L14 1q2-1 3 1L8 15zM7 9c-5-1-7 3-6 6 1 4 7 5 8 1M14 7c6 0 6 4 1 4-4 0-5-2-2-3" />
        </svg>
      </div>
      <button className="ml-3 w-[86px] text-center text-base leading-[23px]">
        <div>9:58</div>
        <div>2021/10/17</div>
      </button>
      <button aria-label="通知" className="ml-5 mr-[25px]">
        <svg width="21" height="20" viewBox="0 0 21 20" fill="none" stroke="#fff" strokeWidth="1.400">
          <path d="M1 1h19v15h-7l-2.500 3L8 16H1z" />
        </svg>
      </button>
      <div className="mr-1 h-[50px] w-px bg-[#6f7b75]" />
    </div>
  </footer>
);

export default function App() {
  return (
    <div className="relative flex h-screen flex-col overflow-hidden bg-[#5e5e5e] font-[family-name:'Noto_Sans','Noto_Sans_CJK_SC',sans-serif]">
      <MenuBar />
      <OptionsBar />
      <Workspace />
      <Taskbar />
      <ImeBar />
      <Watermark />
    </div>
  );
}
